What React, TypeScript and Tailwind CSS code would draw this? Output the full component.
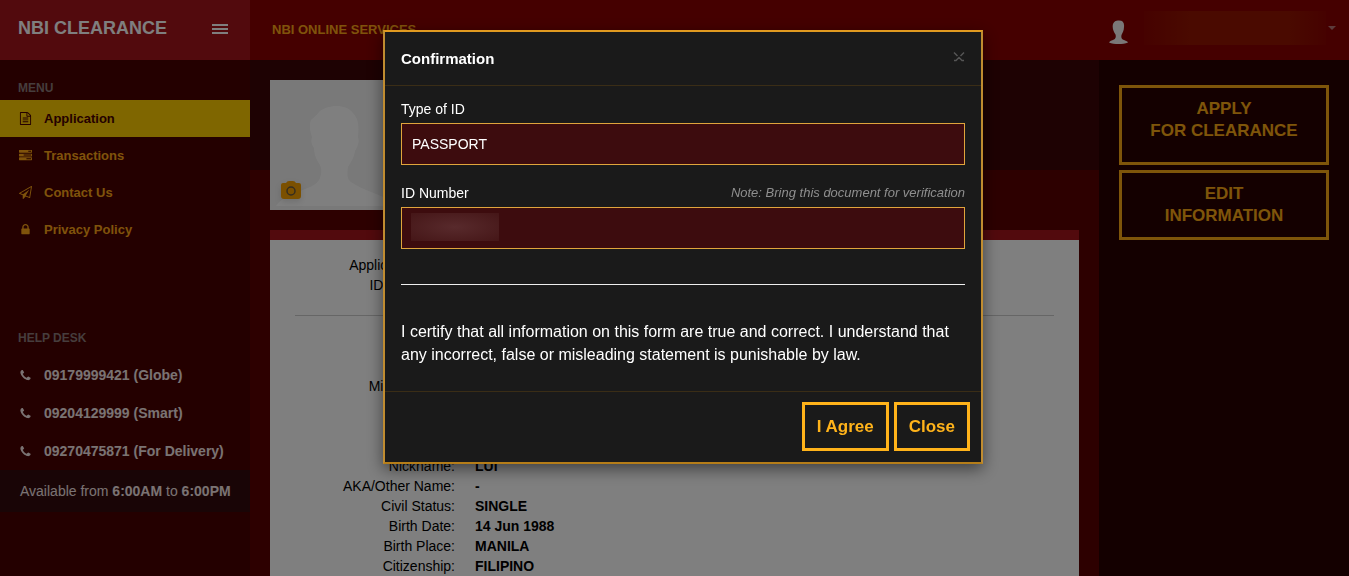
import React from "react";

const ICONS = {
  file: "M1596 380q28 28 48 76t20 88v1152q0 40-28 68t-68 28h-1344q-40 0-68-28t-28-68v-1600q0-40 28-68t68-28h896q40 0 88 20t76 48zm-444-244v376h376q-10-29-22-41l-313-313q-12-12-41-22zm384 1528v-1024h-416q-40 0-68-28t-28-68v-416h-768v1536h1280zm-1024-864q0-14 9-23t23-9h704q14 0 23 9t9 23v64q0 14-9 23t-23 9h-704q-14 0-23-9t-9-23v-64zm736 224q14 0 23 9t9 23v64q0 14-9 23t-23 9h-704q-14 0-23-9t-9-23v-64q0-14 9-23t23-9h704zm0 256q14 0 23 9t9 23v64q0 14-9 23t-23 9h-704q-14 0-23-9t-9-23v-64q0-14 9-23t23-9h704z",
  tasks:
    "M1024 1408h640v-128h-640v128zm-384-512h1024v-128h-1024v128zm640-512h384v-128h-384v128zm512 832v256q0 26-19 45t-45 19h-1664q-26 0-45-19t-19-45v-256q0-26 19-45t45-19h1664q26 0 45 19t19 45zm0-512v256q0 26-19 45t-45 19h-1664q-26 0-45-19t-19-45v-256q0-26 19-45t45-19h1664q26 0 45 19t19 45zm0-512v256q0 26-19 45t-45 19h-1664q-26 0-45-19t-19-45v-256q0-26 19-45t45-19h1664q26 0 45 19t19 45z",
  plane:
    "M1764 11q33 24 27 64l-256 1536q-5 29-32 45-14 8-31 8-11 0-24-5l-527-215-298 327q-18 21-47 21-14 0-23-4-19-7-30-23.5t-11-36.5v-452l-472-193q-37-14-40-55-3-39 32-59l1664-960q35-21 68 2zm-342 1499l221-1323-1434 827 336 137 863-639-478 797z",
  lock: "M640 768h512v-192q0-106-75-181t-181-75-181 75-75 181v192zm832 96v576q0 40-28 68t-68 28h-960q-40 0-68-28t-28-68v-576q0-40 28-68t68-28h32v-192q0-184 132-316t316-132 316 132 132 316v192h32q40 0 68 28t28 68z",
  phone:
    "M1600 1240q0 27-10 70.5t-21 68.5q-21 50-122 106-94 51-186 51-27 0-53-3.5t-57.5-12.5-47-14.5-55.5-20.5-49-18q-98-35-175-83-127-79-264-216t-216-264q-48-77-83-175-3-9-18-49t-20.5-55.5-14.5-47-12.5-57.5-3.5-53q0-92 51-186 56-101 106-122 25-11 68.5-21t70.5-10q14 0 21 3 18 6 53 76 11 19 30 54t35 63.5 31 53.5q3 4 17.5 25t21.5 35.5 7 28.5q0 20-28.5 50t-62 55-62 53-28.5 46q0 9 5 22.5t8.5 20.5 14 24 11.5 19q76 137 174 235t235 174q2 1 19 11.5t24 14 20.5 8.5 22.5 5q18 0 46-28.5t53-62 55-62 50-28.5q14 0 28.5 7t35.5 21.5 25 17.5q25 15 53.5 31t63.5 35 54 30q70 35 76 53 3 7 3 21z",
};

type IconName = keyof typeof ICONS;

const MENU: { icon: IconName; label: string; active?: boolean }[] = [
  { icon: "file", label: "Application", active: true },
  { icon: "tasks", label: "Transactions" },
  { icon: "plane", label: "Contact Us" },
  { icon: "lock", label: "Privacy Policy" },
];

const PHONES = [
  "09179999421 (Globe)",
  "09204129999 (Smart)",
  "09270475871 (For Delivery)",
];

const SUMMARY: [string, string][] = [
  ["Application Date:", ""],
  ["ID Presented:", ""],
];

const NAME: [string, string][] = [["Middle Name:", ""]];

const DETAILS: [string, string][] = [
  ["Nickname:", "LUI"],
  ["AKA/Other Name:", "-"],
  ["Civil Status:", "SINGLE"],
  ["Birth Date:", "14 Jun 1988"],
  ["Birth Place:", "MANILA"],
  ["Citizenship:", "FILIPINO"],
];

function Icon({ name }: { name: IconName }) {
  return (
    <svg className="h-[13px] w-[13px] shrink-0" viewBox="0 0 1792 1792" fill="currentColor">
      <path d={ICONS[name]} />
    </svg>
  );
}

function Sidebar() {
  return (
    <aside className="w-[250px] shrink-0 bg-[#480000] font-bold">
      <div className="flex h-[60px] items-center justify-between bg-[#a4141a] pb-1 pl-[18px] pr-[22px] text-white">
        <span className="text-lg leading-5">NBI CLEARANCE</span>
        <button type="button" aria-label="Toggle menu">
          <svg className="mt-[2px] h-4 w-4" viewBox="0 0 16 16" fill="currentColor">
            <path d="M0 3h16v2H0zM0 7h16v2H0zM0 11h16v2H0z" />
          </svg>
        </button>
      </div>

      <h2 className="mt-[18px] mb-[2px] px-[18px] text-xs leading-5 text-[#8c7a7a]">MENU</h2>
      <nav>
        {MENU.map((item) => (
          <a
            key={item.label}
            href="#"
            className={
              item.active
                ? "flex h-[37px] items-center gap-3 bg-[#ffcc00] px-[19px] text-[13px] text-[#480000]"
                : "flex h-[37px] items-center gap-3 px-[19px] text-[13px] text-[#ffa617]"
            }
          >
            <Icon name={item.icon} />
            {item.label}
          </a>
        ))}
      </nav>

      <h2 className="mt-[80px] mb-2 px-[18px] text-xs leading-5 text-[#8c7a7a]">HELP DESK</h2>
      <ul>
        {PHONES.map((phone) => (
          <li key={phone} className="flex h-[38px] items-center gap-3 px-[19px] text-sm text-[#f5e6e6]">
            <Icon name="phone" />
            {phone}
          </li>
        ))}
      </ul>
      <p className="bg-[#320a0c] py-[11px] pl-5 pr-2 text-sm font-normal leading-5 text-[#f5e6e6]">
        Available from <b>6:00AM</b> to <b>6:00PM</b>
      </p>
    </aside>
  );
}

function TopBar() {
  return (
    <header className="flex h-[60px] shrink-0 items-center justify-between bg-[#8a0000] pb-px pl-[22px] pr-[13px]">
      <span className="text-[13px] font-bold text-[#ffa617]">NBI ONLINE SERVICES</span>
      <button type="button" aria-label="Account" className="flex items-center">
        <svg className="mt-1 h-6 w-[19px]" viewBox="0 0 19 24" fill="#f4f0f0">
          <path d="M4 4C5 1 8 0 10 0.5C14 0.5 15.500 3 15 7C15 11 13.500 12.500 12.500 15C12 18 12.500 19 15 20C17.500 21 18.500 21.500 19 22.500C14 24.500 5 24.500 0 22.500C1 21 2.500 20.500 5 19.500C7 18.500 7 16 6.500 14.500C4.500 12 3 8 4 4Z" />
        </svg>
        <span className="mb-1 ml-4 h-[34px] w-[182px] bg-[linear-gradient(90deg,#8c0400,#941400_25%,#941400_80%,#8c0400)]" />
        <span className="mb-1 ml-[2px] border-x-4 border-t-4 border-x-transparent border-t-[#b87878]" />
      </button>
    </header>
  );
}

function Photo() {
  return (
    <div className="relative h-[130px] w-[130px] bg-[#f2f2f2]">
      <svg className="h-full w-full" viewBox="0 0 130 130">
        <path
          fill="#ffffff"
          d="M41 40C43 38 46 36 49 32C57 25 75 23 83 33C89 39 89 48 88 57C90 62 87 68 85 71C84 78 81 82 78 87C77 94 77 99 81 102C92 110 112 115 121 121L125 126H6C9 121 16 116 25 113C35 109 47 106 50 98C52 92 52 87 48 82C45 77 44 72 44 68C41 64 41 60 42 57C40 52 39 44 41 40Z"
        />
      </svg>
      <button type="button" aria-label="Change photo" className="absolute bottom-[10px] left-[10px]">
        <svg className="h-[20px] w-[22px] drop-shadow-md" viewBox="0 0 22 20">
          <path fill="#f7a000" d="M3 3h3q1-2 3-2h4q2 0 3 2h3q2 0 2 2v11q0 3-3 3H4q-3 0-3-3V5q0-2 2-2z" />
          <circle cx="11" cy="11" r="4" fill="none" stroke="#6a5a40" strokeWidth="1.500" />
        </svg>
      </button>
    </div>
  );
}

function Rows({ rows }: { rows: [string, string][] }) {
  return (
    <dl className="grid grid-cols-[160px_1fr] gap-x-5 text-sm leading-5 text-black">
      {rows.map(([label, value]) => (
        <React.Fragment key={label}>
          <dt className="text-right">{label}</dt>
          <dd className="font-bold">{value}</dd>
        </React.Fragment>
      ))}
    </dl>
  );
}

function Actions() {
  return (
    <aside className="flex w-[250px] shrink-0 flex-col gap-[5px] bg-[#280000] px-5 pt-[25px] text-[17px] font-bold leading-[22px] text-[#fcaa14]">
      <button type="button" className="border-[3px] border-[#fcaa14] px-3 pt-[10px] pb-5">
        APPLY
        <br />
        FOR CLEARANCE
      </button>
      <button type="button" className="border-[3px] border-[#fcaa14] px-3 py-[10px]">
        EDIT
        <br />
        INFORMATION
      </button>
    </aside>
  );
}

function ConfirmationModal() {
  return (
    <div className="fixed inset-0 flex items-start justify-center bg-black/50 pt-[30px] pl-[17px]">
      <div
        role="dialog"
        aria-labelledby="confirm-title"
        className="w-[600px] border-2 border-x-[#c08c30] border-t-[#e09a20] border-b-[#b57d18] bg-[#1a1a1a] text-white shadow-[0_5px_15px_rgba(0,0,0,0.5)]"
      >
        <div className="flex items-center justify-between border-b border-[#3a2d16] px-4 pt-[17px] pb-4">
          <h1 id="confirm-title" className="text-[15px] font-bold leading-5">
            Confirmation
          </h1>
          <button type="button" aria-label="Dismiss" className="pb-1">
            <svg className="h-3 w-3" viewBox="0 0 12 12" fill="none" stroke="#555555" strokeWidth="1.500">
              <path d="M1 1.500L4.500 5M11 1.500L7.500 5M1 9.500h2l3-3 3 3h2" />
            </svg>
          </button>
        </div>

        <div className="px-4 pt-[13px] pb-[25px]">
          <label htmlFor="id-type" className="block text-sm leading-5">
            Type of ID
          </label>
          <input
            id="id-type"
            readOnly
            defaultValue="PASSPORT"
            className="mt-1 block h-[42px] w-full border border-[#e0a53c] bg-[#3d0c0e] px-[10px] text-sm outline-none"
          />

          <div className="mt-[18px] flex items-center justify-between leading-5">
            <label htmlFor="id-number" className="text-sm leading-5">
              ID Number
            </label>
            <em className="text-[13px] text-[#8f8f8f]">Note: Bring this document for verification</em>
          </div>
          <div className="relative mt-1">
            <input
              id="id-number"
              readOnly
              className="block h-[42px] w-full border border-[#e0a53c] bg-[#3d0c0e] px-[10px] text-sm outline-none"
            />
            <span className="absolute top-[6px] left-[10px] h-7 w-[88px] bg-[radial-gradient(#582a2c,#451617)]" />
          </div>

          <hr className="mt-[35px] border-[#eeeeee]" />
          <p className="mt-[35px] text-base leading-[23px]">
            I certify that all information on this form are true and correct. I understand that any
            incorrect, false or misleading statement is punishable by law.
          </p>
        </div>

        <div className="flex justify-end gap-[5px] border-t border-[#3a2d16] px-[11px] pt-[10px] pb-[11px] text-[17px] font-bold leading-[23px] text-[#ffb31a]">
          <button type="button" className="border-[3px] border-[#ffb31a] px-3 py-[10px]">
            I Agree
          </button>
          <button type="button" className="border-[3px] border-[#ffb31a] px-3 py-[10px]">
            Close
          </button>
        </div>
      </div>
    </div>
  );
}

export default function App() {
  return (
    <div className="flex h-screen overflow-hidden font-['Liberation_Sans',Arial,sans-serif]">
      <Sidebar />
      <div className="flex min-w-0 flex-1 flex-col">
        <TopBar />
        <div className="flex min-h-0 flex-1">
          <main className="min-w-0 flex-1 bg-[#5a0000]">
            <div className="h-[110px] bg-[#3c0406] px-5 pt-5">
              <Photo />
            </div>
            <section className="mx-5 mt-[60px] border-t-[10px] border-[#a4141a] bg-white px-[25px] pt-[15px] pb-5">
              <Rows rows={SUMMARY} />
              <hr className="mt-5 mb-[60px] border-[#cccccc]" />
              <div className="grid gap-[60px]">
                <Rows rows={NAME} />
                <Rows rows={DETAILS} />
              </div>
            </section>
          </main>
          <Actions />
        </div>
      </div>
      <ConfirmationModal />
    </div>
  );
}
